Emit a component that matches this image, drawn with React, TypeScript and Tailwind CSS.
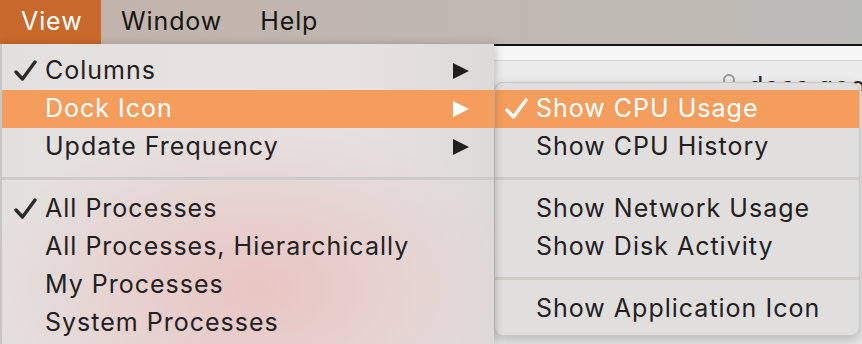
import React from "react";

const font = { fontFamily: 'Inter, "Noto Sans", "Liberation Sans", sans-serif' };

function Check({ white }: { white?: boolean }) {
  return (
    <svg width="24" height="22" viewBox="0 0 24 22" className="shrink-0">
      <path
        d="M2 12 L8.5 19 L21 2"
        fill="none"
        stroke={white ? "#ffffff" : "#2b2b2b"}
        strokeWidth="3.4"
        strokeLinecap="round"
        strokeLinejoin="round"
      />
    </svg>
  );
}

function Arrow({ white }: { white?: boolean }) {
  return (
    <svg width="18" height="18" viewBox="0 0 18 18">
      <path d="M1 1 L17 9 L1 17 Z" fill={white ? "#ffffff" : "#1f1f1f"} />
    </svg>
  );
}

function MainItem({ label, checked, arrow, active }: { label: string; checked?: boolean; arrow?: boolean; active?: boolean }) {
  return (
    <div className={`h-[38px] flex items-center ${active ? "bg-[#f59d5c] text-white" : "text-[#24201f]"}`}>
      <div className="w-[43px] pl-[12px] flex items-center">{checked && <Check white={active} />}</div>
      <div className="flex-1 text-[25px] leading-none tracking-[1px] pb-[1px]">{label}</div>
      {arrow && (
        <div className="w-[42px] flex items-center">
          <Arrow white={active} />
        </div>
      )}
    </div>
  );
}

function SubItem({ label, checked, active }: { label: string; checked?: boolean; active?: boolean }) {
  return (
    <div className={`h-[38px] flex items-center ${active ? "bg-[#f59d5c] text-white" : "text-[#24201f]"}`}>
      <div className="w-[41px] pl-[10px] flex items-center">{checked && <Check white={active} />}</div>
      <div className="flex-1 text-[25px] leading-none tracking-[1px] pb-[1px]">{label}</div>
    </div>
  );
}

function Sep() {
  return (
    <div className="h-[24px] flex items-center">
      <div className="h-[3px] w-full bg-[#cfcbc9]" />
    </div>
  );
}

export default function App() {
  return (
    <div className="w-[862px] h-[344px] overflow-hidden relative bg-[#e3e1df]" style={font}>
      {/* menu bar */}
      <div className="h-[44px] flex items-stretch bg-gradient-to-r from-[#c3b3ab] via-[#c0b7b1] to-[#bcbcb6] text-[25px] tracking-[0.9px]">
        <div className="w-[101px] bg-[#c8692b] text-white flex items-center pl-[21px]">View</div>
        <div className="flex items-center pl-[20px] text-[#161514]">Window</div>
        <div className="flex items-center pl-[38px] text-[#161514]">Help</div>
      </div>
      <div className="flex h-[300px]">
        {/* main menu */}
        <div
          className="w-[494px] shrink-0 relative pt-[8px] border-l-[2px] border-[#c9c7c6] shadow-[2px_0_8px_rgba(0,0,0,0.18)] z-10"
          style={{
            background:
              "radial-gradient(ellipse 280px 170px at 255px 245px, #e9c5c3 0%, #e6d4d2 55%, rgba(228,225,223,0) 100%), linear-gradient(90deg,#e3e1df 0%, #e6e2e0 70%, #dcdbd9 100%)",
          }}
        >
          <MainItem label="Columns" checked arrow />
          <MainItem label="Dock Icon" arrow active />
          <MainItem label="Update Frequency" arrow />
          <Sep />
          <MainItem label="All Processes" checked />
          <MainItem label="All Processes, Hierarchically" />
          <MainItem label="My Processes" />
          <MainItem label="System Processes" />
        </div>
        {/* background window */}
        <div className="flex-1 min-w-0 relative bg-[#e7e7e7] border-t-[2px] border-[#151515]">
          <div className="h-[15px] bg-[#f6f6f6] border-b border-[#d6d6d6]" />
          <div className="h-[30px] bg-[#ececec] flex items-start pl-[228px] pt-[13px] gap-[12px] text-[25px] text-[#222] whitespace-nowrap overflow-hidden">
            <svg width="14" height="14" viewBox="0 0 14 14" className="mt-[-1px] shrink-0">
              <circle cx="7" cy="7" r="5" fill="none" stroke="#9a9a9a" strokeWidth="2" />
            </svg>
            <span className="leading-none tracking-[1px]">docs goog</span>
          </div>
          {/* submenu */}
          <div className="absolute left-0 top-[36px] w-[366px] rounded-[9px] bg-[#e0dfde] border border-[#c8c6c5] shadow-[0_4px_12px_rgba(0,0,0,0.2)] py-[7px] overflow-hidden">
            <SubItem label="Show CPU Usage" checked active />
            <SubItem label="Show CPU History" />
            <Sep />
            <SubItem label="Show Network Usage" />
            <SubItem label="Show Disk Activity" />
            <Sep />
            <SubItem label="Show Application Icon" />
          </div>
        </div>
      </div>
    </div>
  );
}
